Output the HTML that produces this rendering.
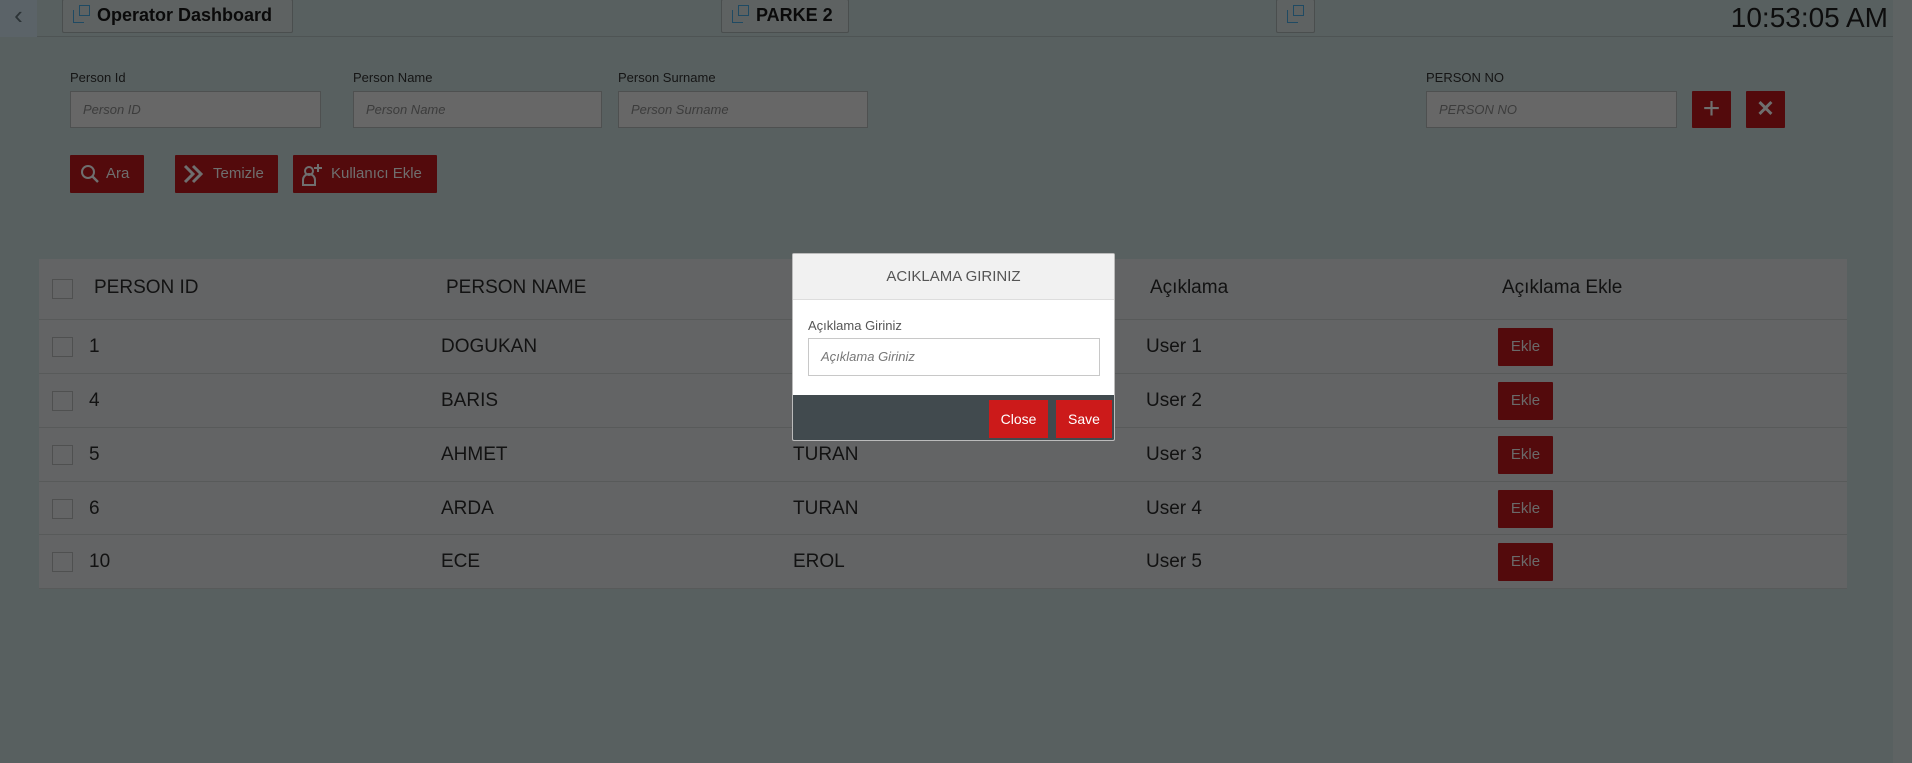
<!DOCTYPE html>
<html><head><meta charset="utf-8"><style>
*{box-sizing:border-box;margin:0;padding:0}
body{width:1912px;height:763px;overflow:hidden;background:#586060;font-family:"Liberation Sans",Arial,sans-serif;position:relative;color:#111}
.a{position:absolute}
.top{left:0;top:0;width:1893px;height:37px;border-bottom:1px solid #4e5454}
.back{left:0;top:0;width:37px;height:37px;background:#5b6368;color:#2c3336;font-size:26px;text-align:center;line-height:30px}
.tb{top:-1px;height:34px;background:#5e6262;border:1px solid #4a4e4e;border-radius:2px;font-weight:bold;font-size:18px;line-height:30px;color:#0a0a0a}
.ic{display:inline-block;position:relative;width:18px;height:18px;vertical-align:-2px;margin:0 6px 0 10px}
.ic i{position:absolute;border:1.5px solid #1f4a63}
.lbl{font-size:13px;color:#151515}
.inp{height:37px;background:#676767;border:1px solid #4e5050;font-style:italic;font-size:13px;color:#3c3c3c;padding-left:12px;line-height:35px}
.btn{background:#530a0c;color:#6f6f6f;font-size:15px;line-height:38px;height:38px;border-radius:1px}
.tbl{left:39px;top:259px;width:1808px;height:330px;background:#636465}
.row{position:absolute;left:39px;width:1808px;border-top:1px solid #585a5a;height:54px}
.cb{position:absolute;left:13px;width:21px;height:20px;border:1px solid #4f5050;background:#646566}
.t{position:absolute;font-size:19px;color:#121212}
.ek{position:absolute;left:1459px;width:55px;height:38px;background:#530a0c;color:#6a6a6a;font-size:15px;text-align:center;line-height:38px;border-radius:1px}
.sb{left:1893px;top:0;width:19px;height:763px;background:#5e6363}
</style></head><body>
<div class="a top"></div>
<div class="a back">&#8249;</div>
<div class="a tb" style="left:62px;width:231px"><span class="ic"><i style="left:0;top:5px;width:11px;height:13px;border-right:none;border-top:none"></i><i style="left:6px;top:0;width:11px;height:11px"></i></span>Operator Dashboard</div>
<div class="a tb" style="left:721px;width:128px"><span class="ic"><i style="left:0;top:5px;width:11px;height:13px;border-right:none;border-top:none"></i><i style="left:6px;top:0;width:11px;height:11px"></i></span>PARKE 2</div>
<div class="a tb" style="left:1276px;width:39px"><span class="ic" style="margin-left:10px"><i style="left:0;top:5px;width:11px;height:13px;border-right:none;border-top:none"></i><i style="left:6px;top:0;width:11px;height:11px"></i></span></div>
<div class="a" style="right:24px;top:2px;font-size:28px;color:#0d0d0d">10:53:05 AM</div>
<div class="a sb"></div>

<div class="a lbl" style="left:70px;top:70px">Person Id</div>
<div class="a lbl" style="left:353px;top:70px">Person Name</div>
<div class="a lbl" style="left:618px;top:70px">Person Surname</div>
<div class="a lbl" style="left:1426px;top:70px">PERSON NO</div>
<div class="a inp" style="left:70px;top:91px;width:251px">Person ID</div>
<div class="a inp" style="left:353px;top:91px;width:249px">Person Name</div>
<div class="a inp" style="left:618px;top:91px;width:250px">Person Surname</div>
<div class="a inp" style="left:1426px;top:91px;width:251px">PERSON NO</div>
<div class="a btn" style="left:1692px;top:91px;width:39px;height:37px;text-align:center;font-size:30px;line-height:36px">+</div>
<div class="a btn" style="left:1746px;top:91px;width:39px;height:37px;text-align:center;font-size:22px;line-height:36px;font-weight:bold">&#x2715;</div>

<div class="a btn" style="left:70px;top:155px;width:74px;padding-left:36px"><svg class="a" style="left:10px;top:9px" width="20" height="20" viewBox="0 0 20 20"><circle cx="8" cy="8" r="6" fill="none" stroke="#6f6f6f" stroke-width="2"/><path d="M12 12l6 6" stroke="#6f6f6f" stroke-width="2.5"/></svg>Ara</div>
<div class="a btn" style="left:175px;top:155px;width:103px;padding-left:38px"><svg class="a" style="left:8px;top:9px" width="24" height="20" viewBox="0 0 24 20"><path d="M2 2l8 8-8 8M10 2l8 8-8 8" fill="none" stroke="#6f6f6f" stroke-width="3"/></svg>Temizle</div>
<div class="a btn" style="left:293px;top:155px;width:144px;padding-left:38px"><svg class="a" style="left:8px;top:6px" width="26" height="26" viewBox="0 0 26 26"><circle cx="8" cy="10" r="4" fill="none" stroke="#6f6f6f" stroke-width="2"/><path d="M2 24v-5a6 6 0 0 1 12 0v5z M17 3v8M13 7h8" fill="none" stroke="#6f6f6f" stroke-width="2"/></svg>Kullanıcı Ekle</div>

<div class="a tbl"></div>
<div class="cb" style="left:52px;top:279px"></div>
<div class="t" style="left:94px;top:277px">PERSON ID</div>
<div class="t" style="left:446px;top:277px">PERSON NAME</div>
<div class="t" style="left:1150px;top:277px">Açıklama</div>
<div class="t" style="left:1502px;top:277px">Açıklama Ekle</div>

<div class="row" style="top:319px"><div class="cb" style="top:17px"></div><div class="t" style="left:50px;top:16px">1</div><div class="t" style="left:402px;top:16px">DOGUKAN</div><div class="t" style="left:1107px;top:16px">User 1</div><div class="ek" style="top:8px">Ekle</div></div>
<div class="row" style="top:373px"><div class="cb" style="top:17px"></div><div class="t" style="left:50px;top:16px">4</div><div class="t" style="left:402px;top:16px">BARIS</div><div class="t" style="left:1107px;top:16px">User 2</div><div class="ek" style="top:8px">Ekle</div></div>
<div class="row" style="top:427px"><div class="cb" style="top:17px"></div><div class="t" style="left:50px;top:16px">5</div><div class="t" style="left:402px;top:16px">AHMET</div><div class="t" style="left:754px;top:16px">TURAN</div><div class="t" style="left:1107px;top:16px">User 3</div><div class="ek" style="top:8px">Ekle</div></div>
<div class="row" style="top:481px"><div class="cb" style="top:17px"></div><div class="t" style="left:50px;top:16px">6</div><div class="t" style="left:402px;top:16px">ARDA</div><div class="t" style="left:754px;top:16px">TURAN</div><div class="t" style="left:1107px;top:16px">User 4</div><div class="ek" style="top:8px">Ekle</div></div>
<div class="row" style="top:534px"><div class="cb" style="top:17px"></div><div class="t" style="left:50px;top:16px">10</div><div class="t" style="left:402px;top:16px">ECE</div><div class="t" style="left:754px;top:16px">EROL</div><div class="t" style="left:1107px;top:16px">User 5</div><div class="ek" style="top:8px">Ekle</div></div>
<div class="a" style="left:39px;top:588px;width:1808px;border-top:1px solid #585a5a"></div>

<div class="a" style="left:792px;top:253px;width:323px;height:188px;background:#fff;border:1px solid #bbb;border-radius:2px;overflow:hidden">
 <div style="height:46px;background:#f1f1f1;border-bottom:1px solid #ddd;text-align:center;line-height:46px;font-size:15px;color:#555">ACIKLAMA GIRINIZ</div>
 <div class="a" style="left:15px;top:64px;font-size:13px;color:#555">Açıklama Giriniz</div>
 <div class="a" style="left:15px;top:84px;width:292px;height:38px;border:1px solid #c8c8c8;font-style:italic;font-size:13px;color:#777;padding-left:12px;line-height:36px">Açıklama Giriniz</div>
 <div class="a" style="left:0;top:141px;width:323px;height:47px;background:#414a4e"></div>
 <div class="a" style="left:196px;top:146px;width:59px;height:38px;background:#cc1a1a;color:#fff;font-size:14px;text-align:center;line-height:38px">Close</div>
 <div class="a" style="left:263px;top:146px;width:56px;height:38px;background:#cc1a1a;color:#fff;font-size:14px;text-align:center;line-height:38px">Save</div>
</div>
</body></html>
